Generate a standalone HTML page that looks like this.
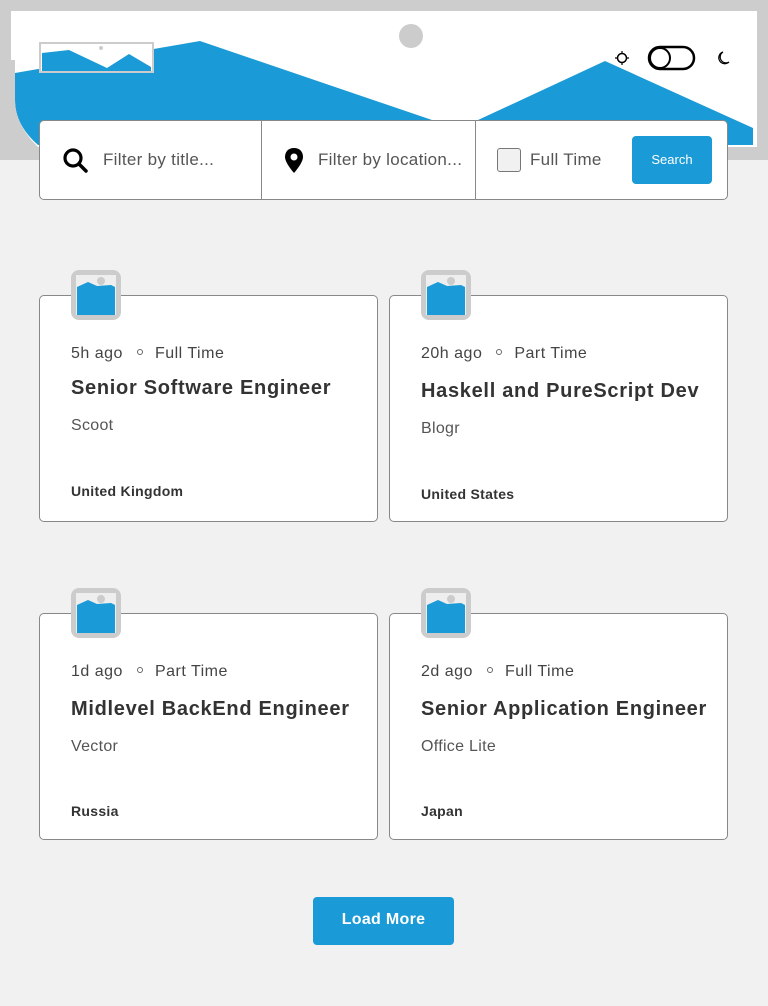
<!DOCTYPE html>
<html><head><meta charset="utf-8"><style>
*{box-sizing:border-box;margin:0;padding:0}
body{width:768px;height:1006px;background:#f1f1f1;font-family:"Liberation Sans",sans-serif;color:#333;position:relative;overflow:hidden}
.hdr{position:absolute;left:0;top:0;width:768px;height:160px;background:#cdcdcd}
.abs{position:absolute}
.bar{position:absolute;left:39px;top:120px;width:689px;height:80px;background:#fff;border:1px solid #888;border-radius:5px}
.bar .div{position:absolute;top:0;width:1px;height:78px;background:#888}
.ph{position:absolute;top:29px;font-size:17px;color:#555;letter-spacing:0.3px}
.btn{position:absolute;background:#1a9ad6;color:#fff;border-radius:4px;text-align:center}
.card{position:absolute;width:339px;height:227px;background:#fff;border:1px solid #888;border-radius:5px}
.logo{position:absolute;left:31px;top:-26px;width:50px;height:50px;background:#ccc;border-radius:8px}
.meta{position:absolute;left:31px;top:49px;font-size:16px;color:#444;letter-spacing:0.5px}
.meta .dot{display:inline-block;width:6px;height:6px;border:1px solid #666;border-radius:50%;margin:0 12px 3px 14px;vertical-align:middle}
.title{position:absolute;left:31px;top:81px;font-size:20px;font-weight:bold;color:#333;white-space:nowrap;letter-spacing:0.7px}
.co{position:absolute;left:31px;top:121px;font-size:16px;color:#555;letter-spacing:0.3px}
.ct{position:absolute;left:31px;top:187px;font-size:14px;font-weight:bold;color:#333;letter-spacing:0.3px}
</style></head><body>
<div class="hdr"></div>
<svg class="abs" style="left:0;top:0" width="768" height="160">
<rect x="11" y="11" width="746" height="136" fill="#fff"/>
<path d="M15 73 L200 41 L432 120 L478 120 L605 61 L753 128 L753 145 L38 145 Q15 125 15 100 Z" fill="#1a9ad6"/>
<path d="M11 60 V147 H38 Q15 125 15 100 V60Z" fill="#cdcdcd"/>
<circle cx="411" cy="36" r="12" fill="#ccc"/>
<rect x="40" y="43" width="113" height="29" fill="#fff" stroke="#ccc" stroke-width="2"/>
<path d="M42 53 L69 50 L107 68 L129 54 L151 67 L151 71 L42 71Z" fill="#1a9ad6"/>
<circle cx="101" cy="48" r="2" fill="#ccc"/>
<circle cx="622" cy="58" r="4.5" fill="none" stroke="#000" stroke-width="1.5"/>
<g stroke="#000" stroke-width="1.2"><path d="M622 51v2M622 63v2M615 58h2M627 58h2"/></g>
<rect x="649" y="47" width="45" height="22" rx="11" fill="none" stroke="#000" stroke-width="2.5"/>
<circle cx="660" cy="58" r="10" fill="none" stroke="#000" stroke-width="2"/>
<path d="M723 52 A6 6 0 1 0 729 62 A5 5 0 0 1 723 52Z" fill="none" stroke="#000" stroke-width="1.2"/>
</svg>
<div class="bar">
<svg class="abs" style="left:22px;top:26px" width="28" height="28"><circle cx="11" cy="11" r="8" fill="none" stroke="#000" stroke-width="3.2"/><path d="M17 17 L24 24" stroke="#000" stroke-width="3.5" stroke-linecap="round"/></svg>
<div class="ph" style="left:63px">Filter by title...</div>
<div class="div" style="left:221px"></div>
<svg class="abs" style="left:244px;top:26px" width="20" height="28"><path d="M10 1 C4 1 1 5 1 10 C1 16 10 26 10 26 C10 26 19 16 19 10 C19 5 16 1 10 1Z" fill="#000"/><circle cx="10" cy="10" r="3.5" fill="#fff"/></svg>
<div class="ph" style="left:278px">Filter by location...</div>
<div class="div" style="left:435px"></div>
<div class="abs" style="left:457px;top:27px;width:24px;height:24px;border:1px solid #777;border-radius:3px;background:#f1f1f1"></div>
<div class="ph" style="left:490px">Full Time</div>
<div class="btn" style="left:592px;top:15px;width:80px;height:48px;line-height:48px;font-size:13px">Search</div>
</div>

<div class="card" style="left:39px;top:295px"><div class="logo"><svg width="50" height="50"><rect x="5" y="5" width="40" height="40" fill="#eee"/><path d="M6 17 L17 12 L26 16 L40 15 L44 17 L44 45 L6 45Z" fill="#1a9ad6"/><circle cx="30" cy="11" r="4" fill="#ccc"/></svg></div>
<div class="meta">5h ago<span class="dot"></span>Full Time</div><div class="title">Senior Software Engineer</div><div class="co">Scoot</div><div class="ct">United Kingdom</div></div>

<div class="card" style="left:389px;top:295px"><div class="logo"><svg width="50" height="50"><rect x="5" y="5" width="40" height="40" fill="#eee"/><path d="M6 17 L17 12 L26 16 L40 15 L44 17 L44 45 L6 45Z" fill="#1a9ad6"/><circle cx="30" cy="11" r="4" fill="#ccc"/></svg></div>
<div class="meta">20h ago<span class="dot"></span>Part Time</div><div class="title" style="top:84px">Haskell and PureScript Dev</div><div class="co" style="top:124px">Blogr</div><div class="ct" style="top:190px">United States</div></div>

<div class="card" style="left:39px;top:613px"><div class="logo"><svg width="50" height="50"><rect x="5" y="5" width="40" height="40" fill="#eee"/><path d="M6 17 L17 12 L26 16 L40 15 L44 17 L44 45 L6 45Z" fill="#1a9ad6"/><circle cx="30" cy="11" r="4" fill="#ccc"/></svg></div>
<div class="meta">1d ago<span class="dot"></span>Part Time</div><div class="title" style="top:84px">Midlevel BackEnd Engineer</div><div class="co" style="top:124px">Vector</div><div class="ct" style="top:189px">Russia</div></div>

<div class="card" style="left:389px;top:613px"><div class="logo"><svg width="50" height="50"><rect x="5" y="5" width="40" height="40" fill="#eee"/><path d="M6 17 L17 12 L26 16 L40 15 L44 17 L44 45 L6 45Z" fill="#1a9ad6"/><circle cx="30" cy="11" r="4" fill="#ccc"/></svg></div>
<div class="meta">2d ago<span class="dot"></span>Full Time</div><div class="title" style="top:84px">Senior Application Engineer</div><div class="co" style="top:124px">Office Lite</div><div class="ct" style="top:189px">Japan</div></div>

<div class="btn" style="left:313px;top:897px;width:141px;height:48px;line-height:46px;font-size:16px;font-weight:bold;letter-spacing:0.3px">Load More</div>
</body></html>
